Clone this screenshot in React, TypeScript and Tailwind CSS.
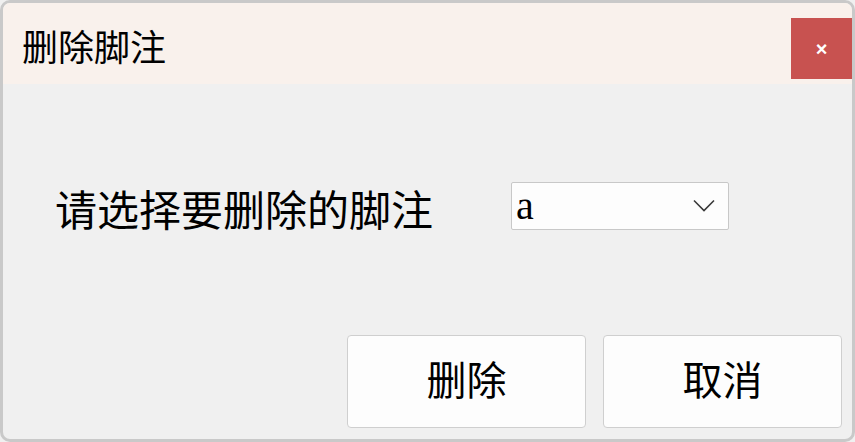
const SANS = "font-['Noto_Sans_CJK_SC','Noto_Sans',sans-serif]";
const SERIF = "font-['Liberation_Serif','Noto_Sans_CJK_SC',serif]";

function DialogButton({ label }: { label: string }) {
  return (
    <button
      type="button"
      className={`flex h-[93px] w-[239px] items-center justify-center rounded-[4px] border border-[#cfcfcf] bg-[#fdfdfd] text-[40px] text-black ${SERIF}`}
    >
      {label}
    </button>
  );
}

export default function App() {
  return (
    <div className="h-[442px] w-[855px] bg-[#f0f0f0]">
      <div className="flex h-full w-full flex-col overflow-hidden rounded-[10px] border-[3px] border-[#c9c9c9] bg-[#f0f0f0]">
        {/* title bar */}
        <div className="flex h-[81px] shrink-0 items-start justify-between bg-[#f9f1ec]">
          <h1 className={`mt-[15px] pl-[19px] text-[36px] leading-[54px] text-black ${SANS}`}>删除脚注</h1>
          <button
            type="button"
            className="mt-[15px] flex h-[61px] w-[61px] items-center justify-center bg-[#c85250] font-['Liberation_Sans',sans-serif] text-[20px] font-bold leading-none text-white"
          >
            ×
          </button>
        </div>

        {/* body */}
        <div className="flex flex-1 flex-col">
          <div className="flex items-start pl-[52px] pt-[98px]">
            <p className={`mt-[-4px] w-[456px] text-[42px] leading-[60px] text-black ${SANS}`}>请选择要删除的脚注</p>
            <div className="flex h-[48px] w-[218px] items-center justify-between rounded-[2px] border border-[#c8c8c8] bg-[#fdfdfd] pl-[4px] pr-[13px]">
              <span className={`text-[40px] leading-none text-black ${SERIF}`}>a</span>
              <svg width="22" height="13" viewBox="0 0 22 13" fill="none" className="mt-[-2px]">
                <path d="M1 1.5 L11 11.5 L21 1.5" stroke="#3a3a3a" strokeWidth="1.6" />
              </svg>
            </div>
          </div>

          <div className="mt-auto flex justify-end gap-[17px] pb-[11px] pr-[10px]">
            <DialogButton label="删除" />
            <DialogButton label="取消" />
          </div>
        </div>
      </div>
    </div>
  );
}
